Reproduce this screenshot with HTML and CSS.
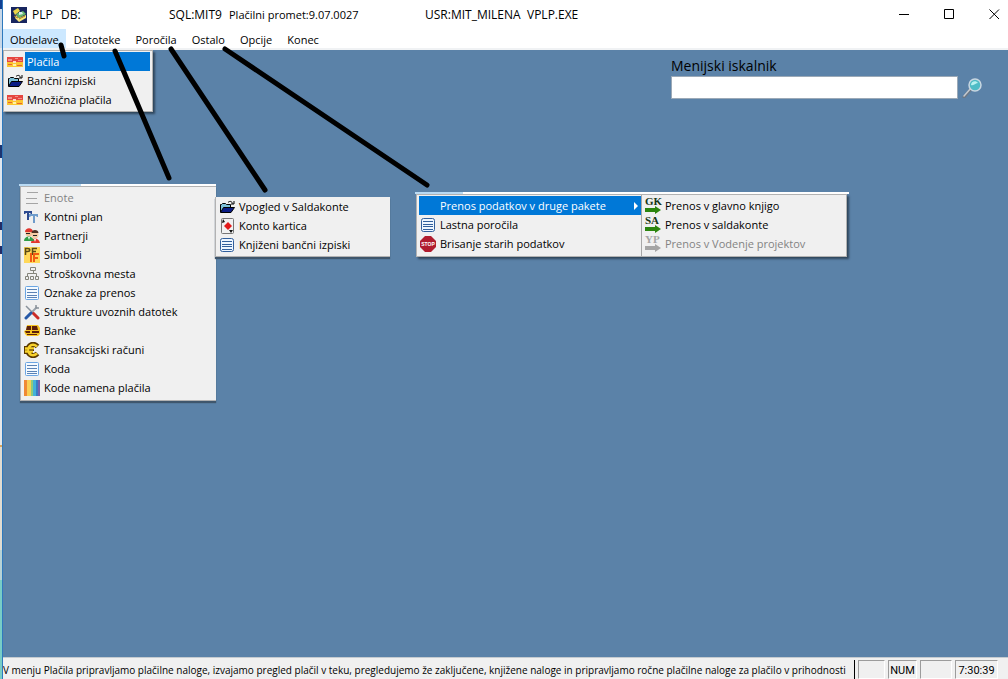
FILE: index.html
```html
<!DOCTYPE html>
<html lang="sl">
<head>
<meta charset="utf-8">
<title>PLP Plačilni promet</title>
<link rel="stylesheet" href="styles.css">
</head>
<body>
<svg class="defs" aria-hidden="true">
  <symbol id="card" viewBox="0 0 16 12">
    <path fill="#e5453f" d="M0 1h16v6H0z"/><path fill="#fbc531" d="M0 6h16v5H0z"/>
    <path fill="#f28f86" d="M1 3h4v2H1zM8 2h3v1H8zM11 4h4v1h-4z"/><path fill="#fbd9c8" d="M6 5h3v2H6z"/><path fill="#e8662f" d="M1 8h4v1H1zM10 9h5v1h-5z"/><path fill="#fff3a5" d="M6 8h3v2H6z"/>
  </symbol>
  <symbol id="folder" viewBox="0 0 16 14">
    <path fill="#7cc0d8" stroke="#000" d="M1.500 12V4.500h1l1-1h3l1 1h4V7"/>
    <path fill="#0a1c85" stroke="#000" d="M1.500 12.500l3-5h11l-3.500 5z"/>
    <path fill="none" stroke="#000" d="M9 2.500c2-2 4-1 4.500 1M15 1v3h-3"/>
  </symbol>
  <symbol id="lines" viewBox="0 0 16 16">
    <path stroke="#a5a5a5" d="M3 2.500h11M2 8.500h11M2 13.500h12"/>
  </symbol>
  <symbol id="tt" viewBox="0 0 16 16">
    <path fill="#2c4a90" d="M0 2h8v3H7L6 4H5v7H3V4H2L1 5H0z"/><path fill="#6f9ccb" d="M5 5h9v3h-1l-1-1h-1v7H9V7H7L6 8H5z"/>
  </symbol>
  <symbol id="people" viewBox="0 0 16 16">
    <circle cx="5" cy="5" r="3.500" fill="#f5c299"/><path fill="#e2372d" d="M1 4c0-5 8-5 8 0zM7 15c0-6 8-6 9 0z"/>
    <path fill="#2f9e46" d="M0 13c0-6 9-6 10 0z"/><circle cx="11" cy="7" r="3.500" fill="#f6cda5"/><path fill="#503326" d="M7.500 5c0-4 7-4 7 0z"/><path fill="#fff" d="M4 9h2l-1 3zM10 11h2l-1 3z"/><path stroke="#222" d="M2 5.500h4M9 7.500h4"/>
  </symbol>
  <symbol id="pf" viewBox="0 0 16 16">
    <path fill="#ffd85a" d="M0 0h16v16H0z"/><path fill="none" stroke="#5a4a15" stroke-width="1.500" d="M1.500 8V1.500h2c3 0 3 3 0 3h-2M8.500 8V1.500H13M8.500 4.500H12"/>
    <path fill="none" stroke="#f05a13" stroke-width="2" d="M7 6v9M10 15V7h5M10 11h4"/>
  </symbol>
  <symbol id="tree" viewBox="0 0 16 16">
    <path fill="none" stroke="#85857b" d="M6.500 1.500h5v3h-5zM9.500 5v2.500M3.500 10V7.500h9V10M1.500 10.500h3v3h-3zM6.500 10.500h3v3h-3zM11.500 10.500h3v3h-3z"/>
  </symbol>
  <symbol id="list" viewBox="0 0 16 16">
    <rect x="1.500" y="1.500" width="13" height="13" rx="1" fill="#f4faff" stroke="#6ba5e2"/>
    <path stroke="#5a82b5" d="M3 4.500h10M3 7.500h10M3 10.500h10M3 12.500h10"/>
  </symbol>
  <symbol id="listdark" viewBox="0 0 16 16">
    <rect x="1.500" y="1.500" width="13" height="13" rx="2" fill="#edf6ff" stroke="#315f9c"/>
    <path stroke="#315f9c" d="M3 4.500h10M3 7.500h10M3 9.500h10M3 12.500h10"/>
  </symbol>
  <symbol id="tools" viewBox="0 0 16 16">
    <path stroke="#8a929b" stroke-width="1.500" d="M2 2l7 7"/><path stroke="#cc2b26" stroke-width="3" stroke-linecap="round" d="M9 9l5 5"/>
    <path stroke="#9aa3ac" stroke-width="2" d="M8 8l5-5"/><path fill="none" stroke="#8a929b" stroke-width="1.500" d="M12 1v3h3"/><path stroke="#2759a7" stroke-width="3" stroke-linecap="round" d="M2 14l5-5"/>
  </symbol>
  <symbol id="bank" viewBox="0 0 16 16">
    <path fill="#f6c322" d="M3 2h11l2 3v6l-2 2H3l-2-2-1-3 2-1z"/><path fill="#5c200b" d="M3 3h4v4H2zM8 3h5l1 4H8zM1 8h5v2H2zM8 8h7v2H8zM3 11h10v1H3z"/>
  </symbol>
  <symbol id="euro" viewBox="0 0 16 16">
    <path fill="none" stroke="#5b3a00" stroke-width="5" d="M13.500 4.500C9 0 4 3 4 8s5 8 9.500 3.500M0 6.500h10M0 9.500h9"/>
    <path fill="none" stroke="#f8d22c" stroke-width="2.500" d="M13 4.500C9 1 4.500 3 4.500 8s4.500 7 8.500 3.500M1 6.500h9M1 9.500h8"/>
    <path stroke="#5b3a00" d="M5 8h5"/>
  </symbol>
  <symbol id="spectrum" viewBox="0 0 16 16">
    <path fill="#f08a35" d="M0 0h4v16H0z"/><path fill="#f9cf55" d="M3 0h4v16H3z"/><path fill="#8ecb7d" d="M7 0h2v16H7z"/><path fill="#45b2d8" d="M9 0h3v16H9z"/><path fill="#3a7cc4" d="M12 0h2v16h-2z"/><path fill="#7662ae" d="M14 0h2v16h-2z"/>
  </symbol>
  <symbol id="playing" viewBox="0 0 16 16">
    <rect x="2.500" y=".500" width="12" height="15" rx="1" fill="#f1f1f1" stroke="#777"/>
    <path fill="#e21b1b" d="M9 4l4 4-4 4-4-4z"/><path fill="#111" d="M3 5l1-4 2 3zM12 15l-2-3h4z"/>
  </symbol>
  <symbol id="arrow" viewBox="0 0 16 8">
    <path d="M0 2h10V0l6 4-6 4V6H0z" fill="currentColor"/>
  </symbol>
</svg>

<div class="backdrop">
<main class="app">
  <header class="titlebar">
    <svg class="logo" viewBox="0 0 16 16"><path fill="#17255f" d="M0 0h16v16H0z"/><path fill="#ead449" d="M2 4l5-3 2 3-5 4z"/><path fill="#69b96a" d="M5 7l7-3 3 3-7 4z"/><path fill="#f8e77a" d="M5 8l3 3 7-3v3l-7 4-4-4z"/><path stroke="#a77f20" d="M3 9l4 2M8 12l6-3"/><path fill="#d5efef" d="M8 5h3l1 2-4 1z"/></svg>
    <span class="t-name">PLP</span><span class="t-db">DB:</span><span class="t-sql">SQL:MIT9</span><span class="t-promet">Plačilni promet:9.07.0027</span><span class="t-user">USR:MIT_MILENA</span><span>VPLP.EXE</span>
    <div class="controls">
      <button aria-label="Pomanjšaj"><svg viewBox="0 0 11 11"><path d="M0 5.500h10"/></svg></button>
      <button aria-label="Povečaj"><svg viewBox="0 0 11 11"><path d="M.500.500h9v9h-9z"/></svg></button>
      <button aria-label="Zapri"><svg viewBox="0 0 11 11"><path d="M.500.500l9.500 9.500M10 .500L.500 10"/></svg></button>
    </div>
  </header>
  <nav class="menubar">
    <button class="open">Obdelave</button><button>Datoteke</button><button>Poročila</button><button>Ostalo</button><button>Opcije</button><button>Konec</button>
  </nav>
  <section class="desktop">
    <form class="search">
      <label for="q">Menijski iskalnik</label>
      <div class="search-row"><input id="q" type="text"><button type="button" aria-label="Išči"><svg viewBox="0 0 20 20"><path stroke="#6c7682" stroke-width="3" stroke-linecap="round" d="M2 19l7-8"/><path stroke="#c3c9d0" stroke-width="1.500" stroke-linecap="round" d="M2 18l7-8"/><circle cx="13" cy="7" r="6" fill="#4fbcc6" stroke="#c9d6e1" stroke-width="1.500"/><path fill="#b8f1f0" d="M9 7c0-4 5-5 7-2-2 0-4 3-7 2z"/></svg></button></div>
    </form>

    <div class="menu menu-process">
      <button class="item hot"><svg><use href="#card"/></svg><span>Plačila</span></button>
      <button class="item"><svg><use href="#folder"/></svg><span>Bančni izpiski</span></button>
      <button class="item"><svg><use href="#card"/></svg><span>Množična plačila</span></button>
    </div>

    <div class="menu menu-files strip">
      <button class="item" disabled><svg><use href="#lines"/></svg><span>Enote</span></button>
      <button class="item"><svg><use href="#tt"/></svg><span>Kontni plan</span></button>
      <button class="item"><svg><use href="#people"/></svg><span>Partnerji</span></button>
      <button class="item"><svg><use href="#pf"/></svg><span>Simboli</span></button>
      <button class="item"><svg><use href="#tree"/></svg><span>Stroškovna mesta</span></button>
      <button class="item"><svg><use href="#list"/></svg><span>Oznake za prenos</span></button>
      <button class="item"><svg><use href="#tools"/></svg><span>Strukture uvoznih datotek</span></button>
      <button class="item"><svg><use href="#bank"/></svg><span>Banke</span></button>
      <button class="item"><svg><use href="#euro"/></svg><span>Transakcijski računi</span></button>
      <button class="item"><svg><use href="#list"/></svg><span>Koda</span></button>
      <button class="item"><svg><use href="#spectrum"/></svg><span>Kode namena plačila</span></button>
    </div>

    <div class="menu menu-reports">
      <button class="item"><svg><use href="#folder"/></svg><span>Vpogled v Saldakonte</span></button>
      <button class="item"><svg><use href="#playing"/></svg><span>Konto kartica</span></button>
      <button class="item"><svg><use href="#listdark"/></svg><span>Knjiženi bančni izpiski</span></button>
    </div>

    <div class="menu menu-other strip">
      <div class="column">
        <button class="item hot wide"><svg></svg><span>Prenos podatkov v druge pakete</span><i class="more"></i></button>
        <button class="item"><svg><use href="#listdark"/></svg><span>Lastna poročila</span></button>
        <button class="item"><svg viewBox="0 0 16 16"><path fill="#b01c2e" d="M5 0h6l5 5v6l-5 5H5l-5-5V5z"/><text x="8" y="10" class="stop-text">STOP</text></svg><span>Brisanje starih podatkov</span></button>
      </div>
      <div class="column sub">
        <button class="item"><span class="code">GK<svg><use href="#arrow"/></svg></span><span>Prenos v glavno knjigo</span></button>
        <button class="item"><span class="code">SA<svg><use href="#arrow"/></svg></span><span>Prenos v saldakonte</span></button>
        <button class="item" disabled><span class="code">YP<svg><use href="#arrow"/></svg></span><span>Prenos v Vodenje projektov</span></button>
      </div>
    </div>
  </section>
  <footer class="status">
    <span class="hint">V menju Plačila pripravljamo plačilne naloge, izvajamo pregled plačil v teku, pregledujemo že zaključene, knjižene naloge in pripravljamo ročne plačilne naloge za plačilo v prihodnosti</span>
    <span class="cell c1"></span><span class="cell c2">NUM</span><span class="cell c3"></span><span class="cell c4">7:30:39</span>
  </footer>
</main>
<svg class="strokes" viewBox="0 0 440 200" aria-hidden="true"><path d="M61 45l3 11M115 51l54 127M171 49l94 141M225 49l202 136"/></svg>
</div>
</body>
</html>
```
FILE: styles.css
```css
* { box-sizing: border-box; }
body { margin: 0; font: 11px/19px "Open Sans", "Noto Sans", sans-serif; color: #000; }
button { font: inherit; color: inherit; background: none; border: 0; padding: 0; text-align: left; }
.defs { position: absolute; width: 0; height: 0; }

.backdrop {
  position: relative;
  min-height: 100vh;
  display: flex;
  padding-left: 2px;
  overflow: hidden;
  background: linear-gradient(#123f91 0 9px, #c8d8e8 9px 48px, #e4e8ee 48px 145px, #1c3470 145px 158px, #dfe6ee 158px 222px, #232c66 222px 230px, #e6e6e6 230px 246px, #232c66 246px 254px, #e8e8e8 254px 445px, #dba55c 445px 447px, #e2dcd0 447px 550px, #b7d2d5 550px 580px, #78cdc6 580px);
}
.app { flex: 1; min-width: 0; display: flex; flex-direction: column; border-left: 1px solid #2e79bd; }

.titlebar { display: flex; align-items: center; height: 29px; padding-left: 8px; background: #fff; font-size: 12px; white-space: pre; }
.logo { width: 16px; height: 16px; margin-right: 5px; }
.t-name { width: 29px; }
.t-db { width: 108px; }
.t-sql { width: 60px; }
.t-promet { width: 196px; font-size: 11px; }
.t-user { width: 102px; }
.controls { display: flex; gap: 34px; margin-left: auto; padding-right: 8px; }
.controls button { display: flex; }
.controls svg { width: 11px; height: 11px; fill: none; stroke: #000; }

.menubar { display: flex; gap: 1px; height: 21px; background: #fff; border-bottom: 2px solid #f0f2f4; }
.menubar button { padding: 1px 7px 0; }
.menubar .open { background: #cce8ff; }

.desktop { position: relative; flex: 1; background: #5b82a8; }
.search { display: flex; flex-direction: column; align-items: flex-start; width: 311px; margin: 5px 26px 0 auto; }
.search label { font-size: 14px; line-height: 21px; }
.search-row { display: flex; align-items: center; gap: 4px; width: 100%; }
.search input { flex: 1; height: 23px; padding: 2px; border: 1px solid #9ba9b7; background: #fff; font: inherit; }
.search button { display: flex; }
.search button svg { width: 20px; height: 20px; }

.menu { position: absolute; padding: 1px 2px 3px; background: #f0f0f0; border: 1px solid #b2b2b2; box-shadow: 2px 2px 2px #2f465c; }
.menu-process { left: 0; top: 0; width: 150px; padding-bottom: 2px; }
.menu-files { left: 17px; top: 136px; width: 196px; box-shadow: 0 2px 1px #3f566c; border-right: 0; }
.menu-reports { left: 212px; top: 147px; width: 175px; padding: 0 2px 2px; box-shadow: 0 2px 1px #3f566c; border-top: 0; border-right: 0; }
.menu-other { left: 413px; top: 144px; width: 431px; padding: 1px 0 3px 2px; display: flex; }
.strip::before { content: ""; position: absolute; left: -2px; right: 0; top: -3px; height: 2px; background: linear-gradient(90deg, #b9daf3 62px, #fff 62px); }
.menu-other.strip::before { right: -3px; background: linear-gradient(90deg, #b9daf3 48px, #fff 48px); }

.item { display: flex; align-items: center; width: 100%; height: 19px; white-space: nowrap; }
.item > svg { flex: none; width: 16px; height: 16px; margin: 0 4px 0 1px; }
.menu-process .item > svg { margin: 0 2px 0 1px; }
.item span:last-of-type { flex: 1; }
.menu-process .item span { padding-left: 2px; }
.menu-process .hot span, .hot.wide { background: #0078d7; color: #fff; }
.item:disabled { color: #838383; }
.more { border: 4px solid transparent; border-left-color: #fff; border-right: 0; margin-right: 4px; }
.column { width: 223px; }
.sub { flex: 1; margin: -1px 0 -3px -1px; padding: 1px 2px 3px; border-left: 1px solid #a7a7a7; }
.code { flex: none; display: flex; flex-direction: column; width: 16px; margin: 0 4px 0 1px; font: bold 11px/9px "Liberation Serif", serif; color: #183516; }
.code svg { width: 16px; height: 8px; color: #2b850e; }
.item:disabled .code, .item:disabled .code svg { color: #a5a5a5; }
.stop-text { font: bold 5px "Liberation Sans", sans-serif; fill: #fff; text-anchor: middle; }

.status { display: flex; gap: 3px; height: 22px; padding: 2px 10px 0 0; background: #f0f0f0; border-top: 1px solid #c5cbd0; font: 11px/20px Roboto, "Liberation Sans", sans-serif; white-space: nowrap; }
.hint { flex: 1; min-width: 0; overflow: hidden; border-right: 1px solid #000; font-family: "Open Sans", "Noto Sans", sans-serif; font-size: 10px; }
.cell { border: 1px solid #fff; border-top-color: #9c9c9c; border-left-color: #9c9c9c; text-align: center; }
.c1 { width: 27px; }
.c2 { width: 29px; }
.c3 { width: 32px; }
.c4 { width: 43px; }

.strokes { position: absolute; left: 0; top: 0; width: 440px; height: 200px; fill: none; stroke: #000; stroke-width: 5; stroke-linecap: round; pointer-events: none; }
```
